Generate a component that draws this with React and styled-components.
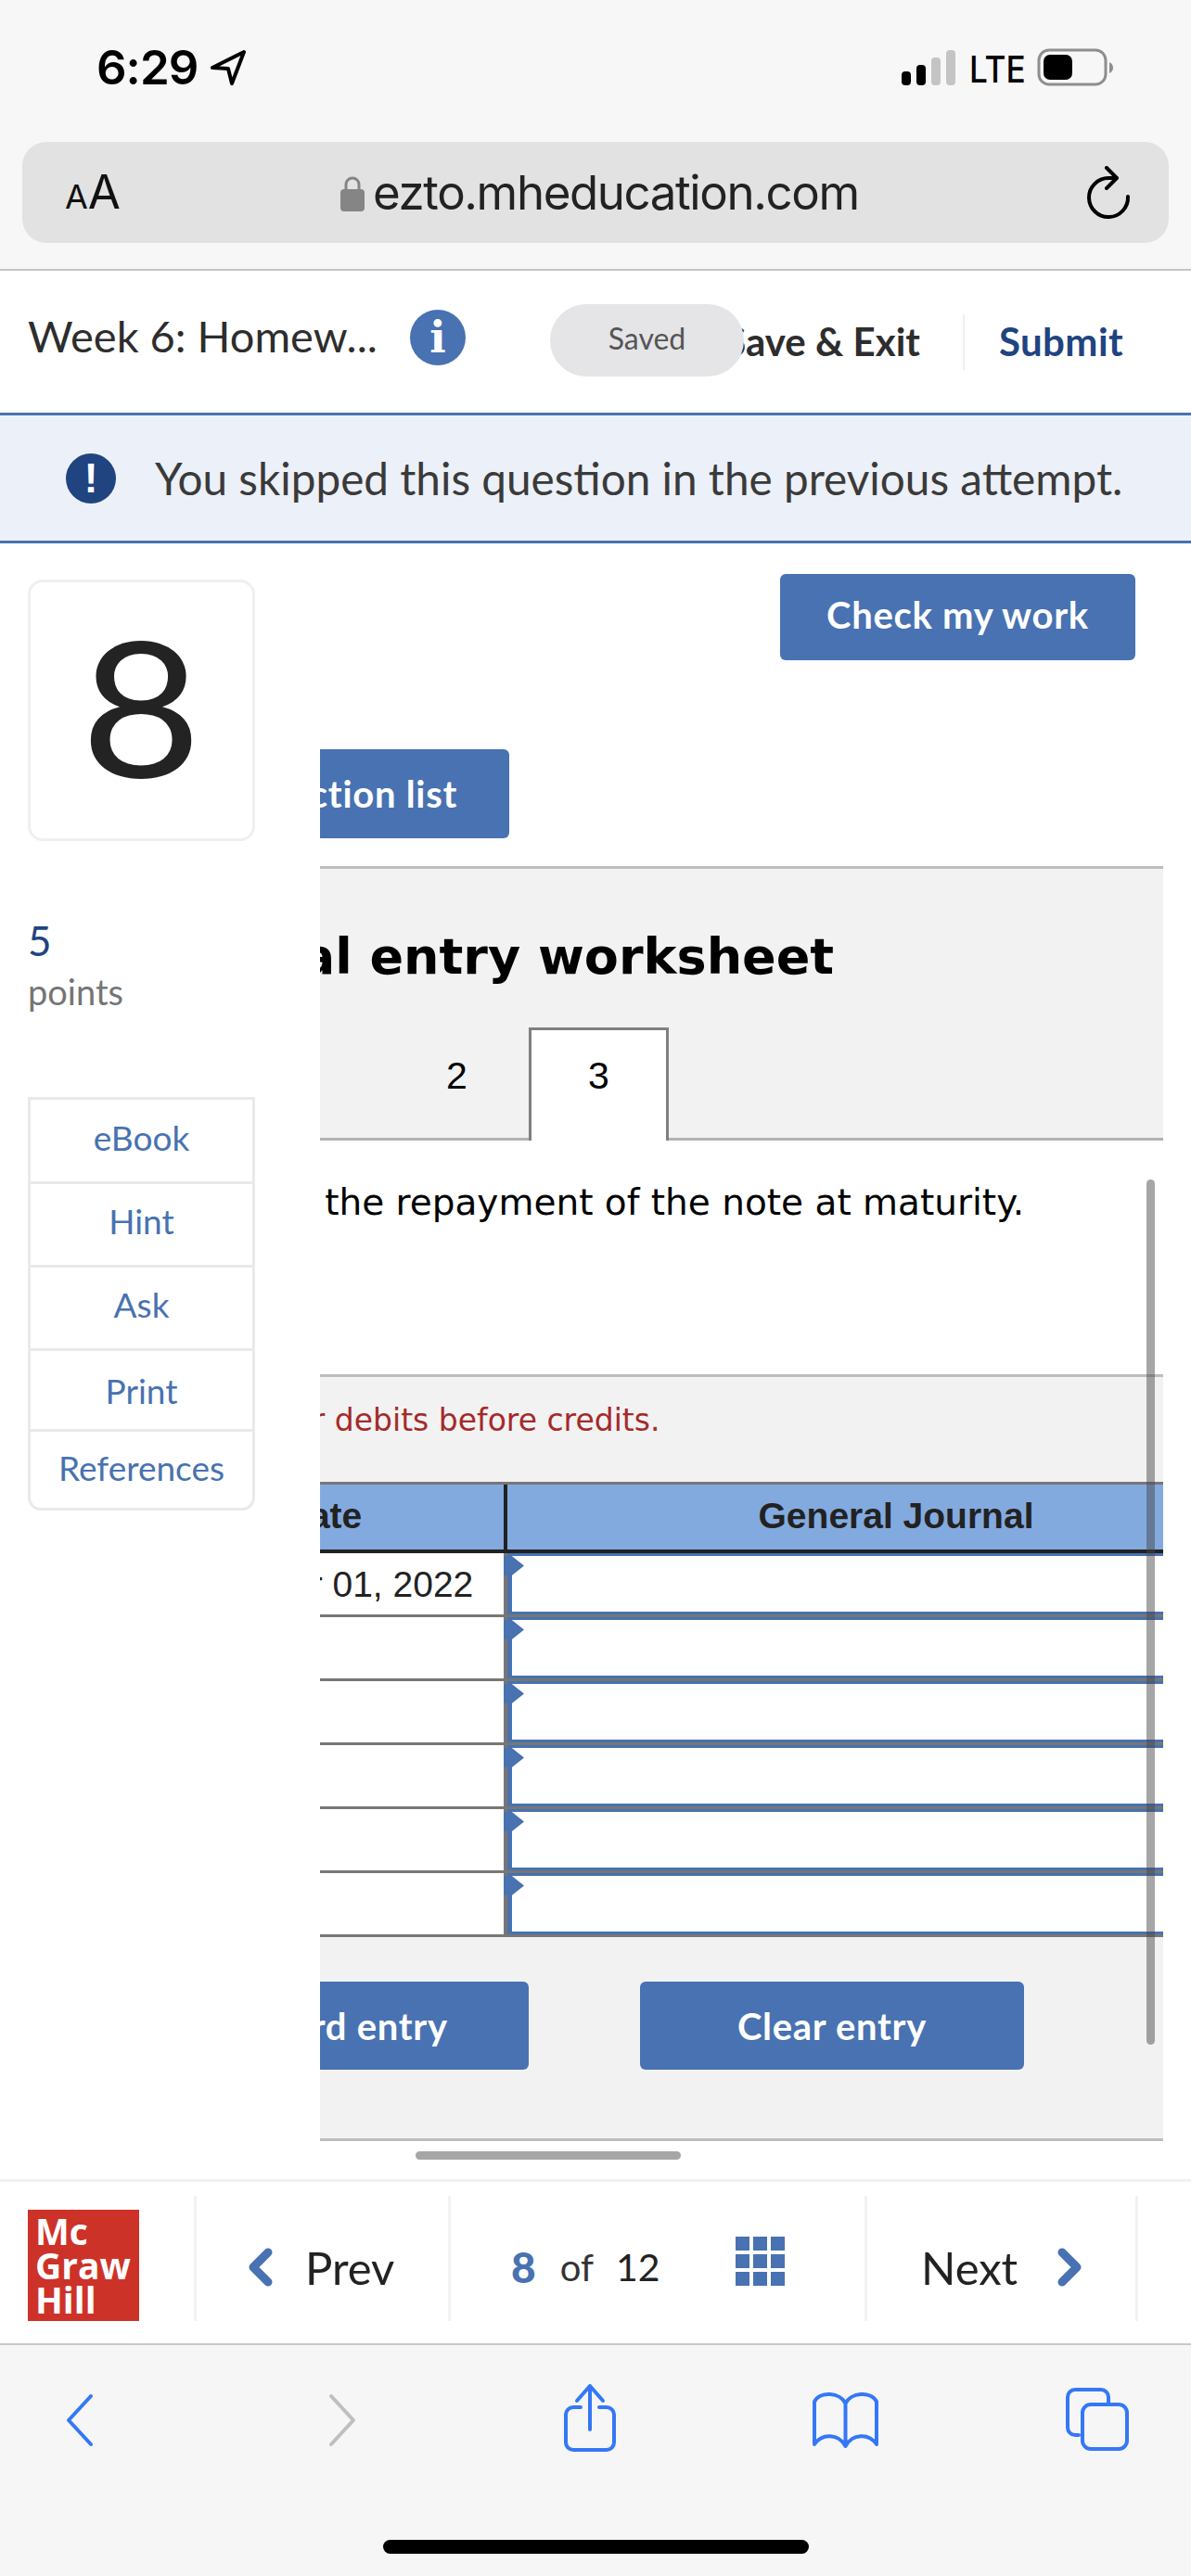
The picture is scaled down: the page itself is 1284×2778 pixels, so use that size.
import React from "react";
import styled, { createGlobalStyle } from "styled-components";

const BLUE = "#4872b1";
const NAVY = "#1f4480";
const SANS = '"Lato", "Open Sans", sans-serif';
const SYS = '"Inter", "Roboto", sans-serif';
const VERDANA = '"DejaVu Sans", sans-serif';
const ARIAL = '"Liberation Sans", Arial, sans-serif';

const Global = createGlobalStyle`
  html, body { margin: 0; padding: 0; background: #fff; }
  * { box-sizing: border-box; }
`;

const Page = styled.div`
  width: 1284px;
  height: 2778px;
  display: flex;
  flex-direction: column;
  overflow: hidden;
  font-family: ${SANS};
`;

/* top safari chrome */
const TopChrome = styled.div`
  height: 292px;
  background: #f7f7f7;
  border-bottom: 2px solid #c4c4c4;
`;
const StatusBar = styled.div`
  height: 153px;
  display: flex;
  align-items: flex-start;
  padding: 43px 82px 0 104px;
  color: #000;
  font-family: ${SYS};
`;
const Clock = styled.div`
  font-size: 51px;
  font-weight: 600;
  line-height: 60px;
  letter-spacing: -1px;
`;
const Locate = styled.svg`
  width: 42px;
  height: 42px;
  margin: 9px 0 0 12px;
`;
const StatusRight = styled.div`
  margin-left: auto;
  display: flex;
  align-items: flex-start;
`;
const Lte = styled.div`
  font-size: 40px;
  font-weight: 500;
  line-height: 48px;
  margin: 8px 0 0 14px;
  transform: scaleX(0.88);
  transform-origin: left;
  width: 73px;
`;
const UrlBar = styled.div`
  height: 109px;
  margin: 0 24px;
  background: #e2e2e2;
  border-radius: 26px;
  display: flex;
  align-items: center;
  padding-left: 46px;
  padding-right: 40px;
`;
const TextSize = styled.div`
  width: 297px;
  font-family: ${SYS};
  color: #111;
  font-size: 51px;
  line-height: 60px;
  padding-top: 3px;
  span { font-size: 36px; }
`;
const Url = styled.div`
  font-family: ${SYS};
  font-size: 51px;
  letter-spacing: -1.4px;
  color: #222;
  margin-left: 9px;
`;
const Reload = styled.svg`
  width: 50px;
  height: 58px;
  margin-left: auto;
`;

/* assignment header */
const HeaderBar = styled.div`
  position: relative;
  height: 150px;
  background: #fff;
  display: flex;
  align-items: center;
  padding-left: 30px;
`;
const AssignTitle = styled.div`
  font-size: 47px;
  color: #2d2d2d;
  width: 412px;
  margin-top: -10px;
`;
const InfoDot = styled.div`
  width: 60px;
  height: 60px;
  border-radius: 50%;
  background: ${BLUE};
  color: #fff;
  font-family: "DejaVu Serif", "Liberation Serif", serif;
  font-weight: 700;
  font-size: 46px;
  line-height: 60px;
  text-align: center;
  margin-top: -6px;
`;
const SaveExit = styled.div`
  margin-left: auto;
  font-size: 42px;
  font-weight: 700;
  color: #2d2d2d;
  margin-top: 2px;
`;
const HeaderDivider = styled.div`
  width: 2px;
  height: 60px;
  background: #efefef;
  margin: 4px 37px 0 46px;
`;
const SubmitLink = styled.div`
  font-size: 42px;
  font-weight: 700;
  color: ${NAVY};
  margin: 2px 73px 0 0;
  letter-spacing: 0.4px;
`;
const SavedPill = styled.div`
  position: absolute;
  left: 593px;
  top: 36px;
  width: 209px;
  height: 78px;
  border-radius: 39px;
  background: #e5e4e6;
  color: #555;
  font-size: 32px;
  line-height: 74px;
  text-align: center;
`;
const Notice = styled.div`
  height: 141px;
  margin-top: 3px;
  background: #ecf0f8;
  border-top: 3px solid ${BLUE};
  border-bottom: 3px solid ${BLUE};
  display: flex;
  align-items: center;
  padding-left: 71px;
  flex: none;
`;
const AlertDot = styled.div`
  width: 54px;
  height: 54px;
  border-radius: 50%;
  background: ${NAVY};
  color: #fff;
  font-family: ${ARIAL};
  font-weight: 700;
  font-size: 44px;
  line-height: 54px;
  text-align: center;
`;
const NoticeText = styled.div`
  font-size: 47.7px;
  color: #3a3a3a;
  margin-left: 42px;
`;

/* main area */
const Main = styled.div`
  height: 1764px;
  display: flex;
  flex: none;
  background: #fff;
`;
const Side = styled.div`
  width: 345px;
  padding: 39px 0 0 30px;
  flex: none;
`;
const NumberCard = styled.div`
  width: 245px;
  height: 282px;
  border: 3px solid #efefef;
  border-radius: 16px;
  color: #232323;
  font-size: 204px;
  line-height: 262px;
  text-align: center;
  span {
    display: inline-block;
    transform: scaleX(1.1);
  }
`;
const PointValue = styled.div`
  font-size: 44px;
  line-height: 50px;
  color: ${NAVY};
  margin-top: 82px;
`;
const PointLabel = styled.div`
  font-size: 38px;
  line-height: 50px;
  color: #757575;
  margin-top: 5px;
`;
const ToolList = styled.div`
  width: 245px;
  margin-top: 89px;
  border: 3px solid #e9e9e9;
  border-radius: 0 0 14px 14px;
`;
const ToolItem = styled.div`
  height: ${(p) => p.$h}px;
  display: flex;
  align-items: center;
  justify-content: center;
  color: ${BLUE};
  font-size: 37px;
  padding-bottom: ${(p) => p.$pb}px;
  border-top: ${(p) => (p.$first ? "0" : "3px solid #e9e9e9")};
`;
const Content = styled.div`
  flex: 1;
  min-width: 0;
`;
const CheckRow = styled.div`
  display: flex;
  justify-content: flex-end;
  padding: 33px 60px 0 0;
  height: 222px;
`;
const ActionButton = styled.div`
  height: ${(p) => p.$h || 95}px;
  width: ${(p) => p.$w}px;
  margin-left: ${(p) => p.$ml || 0}px;
  background: ${BLUE};
  color: #fff;
  border-radius: 6px;
  display: flex;
  align-items: center;
  justify-content: ${(p) => p.$justify || "center"};
  padding-right: ${(p) => p.$pr || 0}px;
  padding-bottom: ${(p) => p.$pb || 0}px;
  font-size: 40px;
  font-weight: 700;
  letter-spacing: 0.7px;
  white-space: nowrap;
  flex: none;
`;
const Pane = styled.div`
  position: relative;
  width: 909px;
  height: 1542px;
  overflow: hidden;
`;
const Sheet = styled.div`
  width: 1232px;
  margin-left: -192px;
`;
const GrayPanel = styled.div`
  background: #f2f2f2;
  margin-top: ${(p) => p.$mt || 0}px;
  border-top: 3px solid #bdbdbd;
  border-bottom: 3px solid ${(p) => p.$bottom || "#bdbdbd"};
`;
const SheetTitle = styled.h1`
  margin: 0;
  padding: 57px 0 0 ${(p) => p.$pl}px;
  font-family: ${VERDANA};
  font-size: 54px;
  font-weight: 700;
  line-height: 76px;
  color: #000;
  white-space: nowrap;
`;
const Tabs = styled.div`
  display: flex;
  gap: 2px;
  margin: 38px 0 -3px 90px;
`;
const Tab = styled.div`
  width: ${(p) => p.$w || 151}px;
  height: 122px;
  font-family: ${ARIAL};
  font-size: 41px;
  color: #000;
  text-align: center;
  line-height: 104px;
  ${(p) => p.$active && "background: #fff; border: 3px solid #808080; border-bottom: 0; line-height: 98px;"}
`;
const Prompt = styled.div`
  height: 252px;
  padding: 42px 0 0 ${(p) => p.$pl}px;
  font-family: ${VERDANA};
  font-size: 39px;
  line-height: 50px;
  color: #000;
  white-space: nowrap;
`;
const Note = styled.div`
  height: 113px;
  padding: 26px 0 0 ${(p) => p.$pl}px;
  font-family: ${VERDANA};
  font-size: 33px;
  line-height: 42px;
  color: #a52a2a;
  white-space: nowrap;
`;
const TableHead = styled.div`
  display: flex;
  height: 77px;
  background: #83aadf;
  border-top: 3px solid #777;
  border-bottom: 4px solid #222;
  font-family: ${ARIAL};
  font-weight: 700;
  font-size: 39px;
  line-height: 68px;
  color: #222;
  text-align: center;
`;
const DateHead = styled.div`
  width: 394px;
  border-right: 4px solid #222;
  flex: none;
`;
const JournalHead = styled.div`
  flex: 1;
`;
const Row = styled.div`
  display: flex;
  height: 69px;
  background: #fff;
  border-bottom: 3px solid #777;
`;
const DateCell = styled.div`
  width: 394px;
  flex: none;
  border-right: 4px solid #777;
  padding-right: 18px;
  font-family: ${ARIAL};
  font-size: 39px;
  line-height: 68px;
  color: #222;
  text-align: center;
  white-space: nowrap;
`;
const JournalCell = styled.div`
  position: relative;
  flex: 1;
  background: #fff;
  border-left: 5px solid ${BLUE};
  border-top: 3px solid ${BLUE};
  border-bottom: 3px solid ${BLUE};
  &::before {
    content: "";
    position: absolute;
    left: -9px;
    top: 0;
    width: 22px;
    height: 21px;
    background: ${BLUE};
    clip-path: polygon(0 0, 40% 0, 100% 50%, 40% 100%, 0 100%);
  }
`;
const EntryButtons = styled.div`
  display: flex;
  padding: 48px 0 74px 5px;
`;
const ScrollY = styled.div`
  position: absolute;
  left: 891px;
  top: 464px;
  width: 9px;
  height: 933px;
  border-radius: 5px;
  background: rgba(70, 70, 70, 0.48);
`;
const ScrollX = styled.div`
  position: absolute;
  left: 103px;
  top: 1512px;
  width: 286px;
  height: 9px;
  border-radius: 5px;
  background: #a6a6a6;
`;

/* bottom nav */
const FooterBar = styled.div`
  height: 179px;
  flex: none;
  background: #fff;
  border-top: 3px solid #f2f2f2;
  border-bottom: 2px solid #c8c8c8;
  display: flex;
  padding-top: 15px;
`;
const LogoCell = styled.div`
  width: 209px;
  flex: none;
  padding: 15px 0 0 30px;
`;
const Logo = styled.div`
  width: 120px;
  height: 120px;
  background: #cd3229;
  color: #fff;
  font-family: "Open Sans", sans-serif;
  font-weight: 700;
  font-size: 39px;
  line-height: 37px;
  padding: 4px 0 0 8px;
`;
const NavCell = styled.div`
  width: ${(p) => p.$w}px;
  height: 135px;
  flex: none;
  border-left: 3px solid #f2f2f2;
  display: flex;
  align-items: center;
  padding-left: ${(p) => p.$pl || 0}px;
  padding-top: 18px;
`;
const NavLabel = styled.span`
  font-size: 49px;
  color: #222;
  margin: 0 ${(p) => p.$mr || 0}px 0 ${(p) => p.$ml || 0}px;
`;
const PageNow = styled.span`
  font-size: 46px;
  font-weight: 900;
  color: ${BLUE};
`;
const PageOf = styled.span`
  font-size: 40px;
  color: #333;
  margin: 0 24px 0 26px;
`;
const PageTotal = styled.span`
  font-size: 41px;
  color: #222;
`;
const GridIcon = styled.svg`
  width: 53px;
  height: 53px;
  margin: -12px 0 0 81px;
`;
const Chevron = styled.svg`
  width: 27px;
  height: 42px;
`;

/* bottom safari chrome */
const BottomChrome = styled.div`
  flex: 1;
  background: #f6f6f6;
  display: flex;
  flex-direction: column;
`;
const Toolbar = styled.div`
  height: 210px;
  display: flex;
  align-items: flex-start;
`;
const ToolIcon = styled.svg`
  width: ${(p) => p.$w}px;
  height: ${(p) => p.$h}px;
  margin-left: ${(p) => p.$ml}px;
  margin-top: ${(p) => p.$mt}px;
  flex: none;
  fill: none;
  stroke: ${(p) => (p.$gray ? "#bfbfbf" : "#3478f6")};
  stroke-width: 4;
  stroke-linecap: round;
  stroke-linejoin: round;
`;
const HomeBar = styled.div`
  width: 459px;
  height: 15px;
  margin-left: 413px;
  border-radius: 8px;
  background: #000;
`;

const ROWS = ["December 01, 2022", "", "", "", "", ""];
const TOOLS = [
  ["eBook", 88, 8],
  ["Hint", 90, 8],
  ["Ask", 90, 8],
  ["Print", 87, 0],
  ["References", 85, 6],
];

export default function App() {
  return (
    <Page>
      <Global />
      <TopChrome>
        <StatusBar>
          <Clock>6:29</Clock>
          <Locate viewBox="0 0 42 42" fill="none" stroke="#000" strokeWidth="4" strokeLinejoin="round">
            <path d="M38 4 L4 21 L21 22 L25 38 Z" />
          </Locate>
          <StatusRight>
            <svg width="60" height="40" viewBox="0 0 60 40" style={{ marginTop: 10 }}>
              <rect x="1" y="24" width="10" height="15" rx="4" fill="#000" />
              <rect x="17" y="17" width="10" height="22" rx="4" fill="#000" />
              <rect x="33" y="9" width="10" height="30" rx="4" fill="#c4c4c4" />
              <rect x="49" y="1" width="10" height="38" rx="4" fill="#c4c4c4" />
            </svg>
            <Lte>LTE</Lte>
            <svg width="84" height="42" viewBox="0 0 84 42" style={{ marginTop: 9 }}>
              <rect x="2" y="2" width="72" height="37" rx="11" fill="none" stroke="#8e8e8e" strokeWidth="3" />
              <rect x="7" y="7" width="31" height="27" rx="7" fill="#000" />
              <path d="M78 15 q4 2 4 6 t-4 6 z" fill="#8e8e8e" />
            </svg>
          </StatusRight>
        </StatusBar>
        <UrlBar>
          <TextSize><span>A</span>A</TextSize>
          <svg width="26" height="40" viewBox="0 0 26 40">
            <path d="M6 18 V11 a7 7 0 0 1 14 0 V18" fill="none" stroke="#858585" strokeWidth="3" />
            <rect x="0" y="16" width="26" height="24" rx="4" fill="#858585" />
          </svg>
          <Url>ezto.mheducation.com</Url>
          <Reload viewBox="0 0 50 58" fill="none" stroke="#000" strokeWidth="4" strokeLinecap="round" strokeLinejoin="round">
            <path d="M46 33 A21 21 0 1 1 25 13 L33 13" />
            <path d="M23 2 L34 13 L23 24" />
          </Reload>
        </UrlBar>
      </TopChrome>

      <HeaderBar>
        <AssignTitle>Week 6: Homew...</AssignTitle>
        <InfoDot>i</InfoDot>
        <SaveExit>Save &amp; Exit</SaveExit>
        <HeaderDivider />
        <SubmitLink>Submit</SubmitLink>
        <SavedPill>Saved</SavedPill>
      </HeaderBar>
      <Notice>
        <AlertDot>!</AlertDot>
        <NoticeText>You skipped this question in the previous attempt.</NoticeText>
      </Notice>

      <Main>
        <Side>
          <NumberCard><span>8</span></NumberCard>
          <PointValue>5</PointValue>
          <PointLabel>points</PointLabel>
          <ToolList>
            {TOOLS.map(([label, h, pb], i) => (
              <ToolItem key={label} $h={h} $pb={pb} $first={i === 0}>{label}</ToolItem>
            ))}
          </ToolList>
        </Side>
        <Content>
          <CheckRow>
            <ActionButton $w={383} $h={93} $pb={6}>Check my work</ActionButton>
          </CheckRow>
          <Pane>
            <Sheet>
              <ActionButton $w={396} $h={96} $justify="flex-end" $pr={56}>View transaction list</ActionButton>
              <GrayPanel $mt={30} $bottom="#b3b3b3">
                <SheetTitle $pl={11}>Journal entry worksheet</SheetTitle>
                <Tabs>
                  <Tab $w={172}>1</Tab>
                  <Tab>2</Tab>
                  <Tab $active>3</Tab>
                </Tabs>
              </GrayPanel>
              <Prompt $pl={50}>Record the repayment of the note at maturity.</Prompt>
              <GrayPanel>
                <Note $pl={9}>Note: Enter debits before credits.</Note>
                <TableHead>
                  <DateHead>Date</DateHead>
                  <JournalHead>General Journal</JournalHead>
                </TableHead>
                {ROWS.map((date, i) => (
                  <Row key={i}>
                    <DateCell>{date}</DateCell>
                    <JournalCell />
                  </Row>
                ))}
                <EntryButtons>
                  <ActionButton $w={412}>Record entry</ActionButton>
                  <ActionButton $w={414} $ml={120}>Clear entry</ActionButton>
                </EntryButtons>
              </GrayPanel>
            </Sheet>
            <ScrollY />
            <ScrollX />
          </Pane>
        </Content>
      </Main>

      <FooterBar>
        <LogoCell>
          <Logo>Mc<br />Graw<br />Hill</Logo>
        </LogoCell>
        <NavCell $w={274} $pl={55}>
          <Chevron viewBox="0 0 27 42" fill="none" stroke={BLUE} strokeWidth="9" strokeLinecap="round" strokeLinejoin="round">
            <path d="M22 5 L6 21 L22 37" />
          </Chevron>
          <NavLabel $ml={35}>Prev</NavLabel>
        </NavCell>
        <NavCell $w={449} $pl={65}>
          <PageNow>8</PageNow>
          <PageOf>of</PageOf>
          <PageTotal>12</PageTotal>
          <GridIcon viewBox="0 0 53 53" fill={BLUE}>
            {[0, 19, 38].map((y) =>
              [0, 19, 38].map((x) => <rect key={`${x}-${y}`} x={x} y={y} width="15" height="15" />)
            )}
          </GridIcon>
        </NavCell>
        <NavCell $w={292} $pl={58}>
          <NavLabel $mr={43}>Next</NavLabel>
          <Chevron viewBox="0 0 27 42" fill="none" stroke={BLUE} strokeWidth="9" strokeLinecap="round" strokeLinejoin="round">
            <path d="M5 5 L21 21 L5 37" />
          </Chevron>
        </NavCell>
        <NavCell $w={59} />
      </FooterBar>

      <BottomChrome>
        <Toolbar>
          <ToolIcon $w={32} $h={58} $ml={70} $mt={52} viewBox="0 0 32 58">
            <path d="M28 3 L4 29 L28 55" />
          </ToolIcon>
          <ToolIcon $gray $w={32} $h={58} $ml={251} $mt={52} viewBox="0 0 32 58">
            <path d="M4 3 L28 29 L4 55" />
          </ToolIcon>
          <ToolIcon $w={60} $h={76} $ml={221} $mt={41} viewBox="0 0 60 76">
            <path d="M30 50 V3 M16 19 L30 3 L44 19" />
            <path d="M20 26 H12 a8 8 0 0 0 -8 8 V64 a8 8 0 0 0 8 8 H48 a8 8 0 0 0 8 -8 V34 a8 8 0 0 0 -8 -8 H40" />
          </ToolIcon>
          <ToolIcon $w={75} $h={64} $ml={208} $mt={49} viewBox="0 0 75 64">
            <path d="M37.5 14 C32 2 10 0 4 12 V58 C12 46 30 46 37.5 60 C45 46 63 46 71 58 V12 C65 0 43 2 37.5 14 V60" />
          </ToolIcon>
          <ToolIcon $w={71} $h={70} $ml={198} $mt={45} viewBox="0 0 71 70">
            <path d="M16 52 H12 a8 8 0 0 1 -8 -8 V11 a8 8 0 0 1 8 -8 H40 a8 8 0 0 1 8 8 V19" />
            <rect x="20" y="19" width="48" height="48" rx="9" />
          </ToolIcon>
        </Toolbar>
        <HomeBar />
      </BottomChrome>
    </Page>
  );
}
